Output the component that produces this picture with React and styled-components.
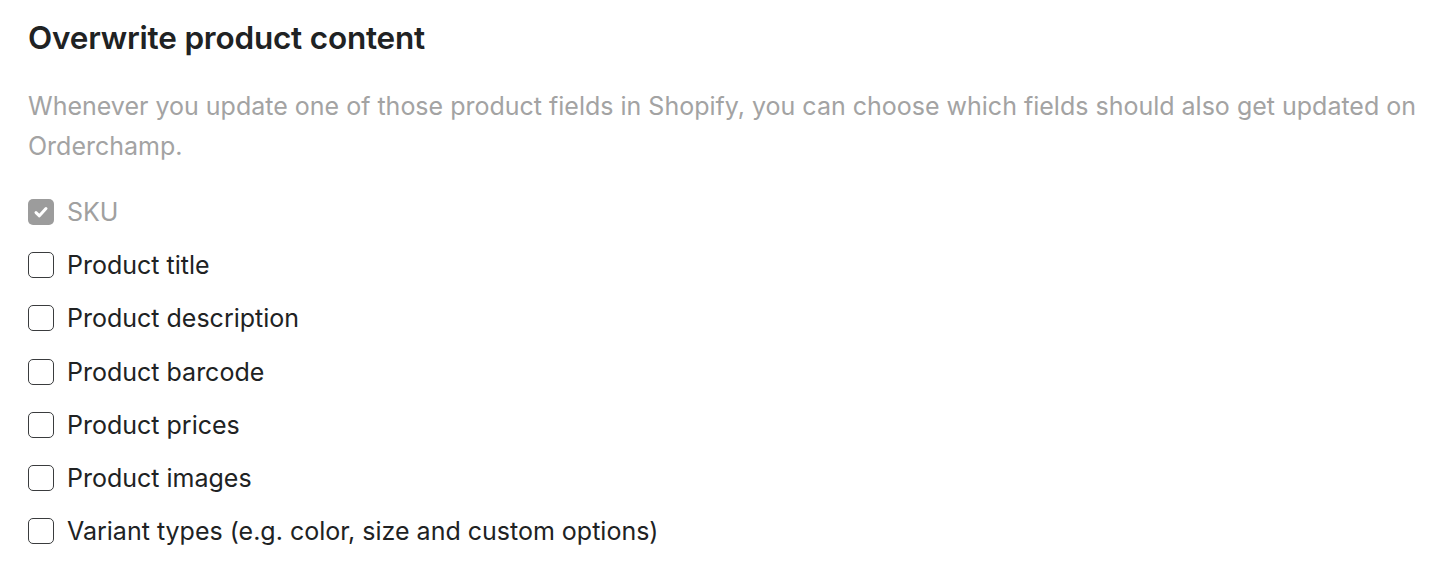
import styled, { createGlobalStyle } from "styled-components";

const GlobalStyle = createGlobalStyle`
  body {
    margin: 0;
    background: #ffffff;
    font-family: Inter, "Noto Sans", sans-serif;
    -webkit-font-smoothing: antialiased;
  }
`;

const Section = styled.div`
  padding: 18px 22px 0 28px;
`;

const Title = styled.h2`
  margin: 0;
  font-size: 31.5px;
  line-height: 40px;
  font-weight: 600;
  color: #202223;
  letter-spacing: -0.2px;
`;

const Description = styled.p`
  margin: 28px 0 0 0;
  font-size: 25px;
  line-height: 40px;
  color: #a3a3a3;
`;

const List = styled.div`
  display: flex;
  flex-direction: column;
  margin-top: 19px;
`;

const Row = styled.label`
  display: flex;
  align-items: center;
  gap: 13px;
  height: 53.3px;
  font-size: 25px;
  color: ${(p) => (p.disabled ? "#a0a0a0" : "#202223")};
`;

const Box = styled.span`
  width: 26px;
  height: 26px;
  box-sizing: border-box;
  border-radius: 5px;
  border: ${(p) => (p.checked ? "none" : "1.5px solid #3a3c3e")};
  background: ${(p) => (p.checked ? "#9c9c9c" : "#ffffff")};
  display: flex;
  align-items: center;
  justify-content: center;
  flex-shrink: 0;
`;

const fields = [
  { label: "SKU", checked: true, disabled: true },
  { label: "Product title" },
  { label: "Product description" },
  { label: "Product barcode" },
  { label: "Product prices" },
  { label: "Product images" },
  { label: "Variant types (e.g. color, size and custom options)" },
];

const Checkbox = ({ checked }) => (
  <Box checked={checked}>
    {checked && (
      <svg width="26" height="26" viewBox="0 0 26 26">
        <path
          d="M8 13.6 L11.4 16.8 L18 9.6"
          fill="none"
          stroke="#ffffff"
          strokeWidth="3"
          strokeLinecap="round"
          strokeLinejoin="round"
        />
      </svg>
    )}
  </Box>
);

const App = () => (
  <>
    <GlobalStyle />
    <Section>
      <Title>Overwrite product content</Title>
      <Description>
        Whenever you update one of those product fields in Shopify, you can
        choose which fields should also get updated on Orderchamp.
      </Description>
      <List>
        {fields.map((f) => (
          <Row key={f.label} disabled={f.disabled}>
            <Checkbox checked={f.checked} />
            {f.label}
          </Row>
        ))}
      </List>
    </Section>
  </>
);

export default App;
